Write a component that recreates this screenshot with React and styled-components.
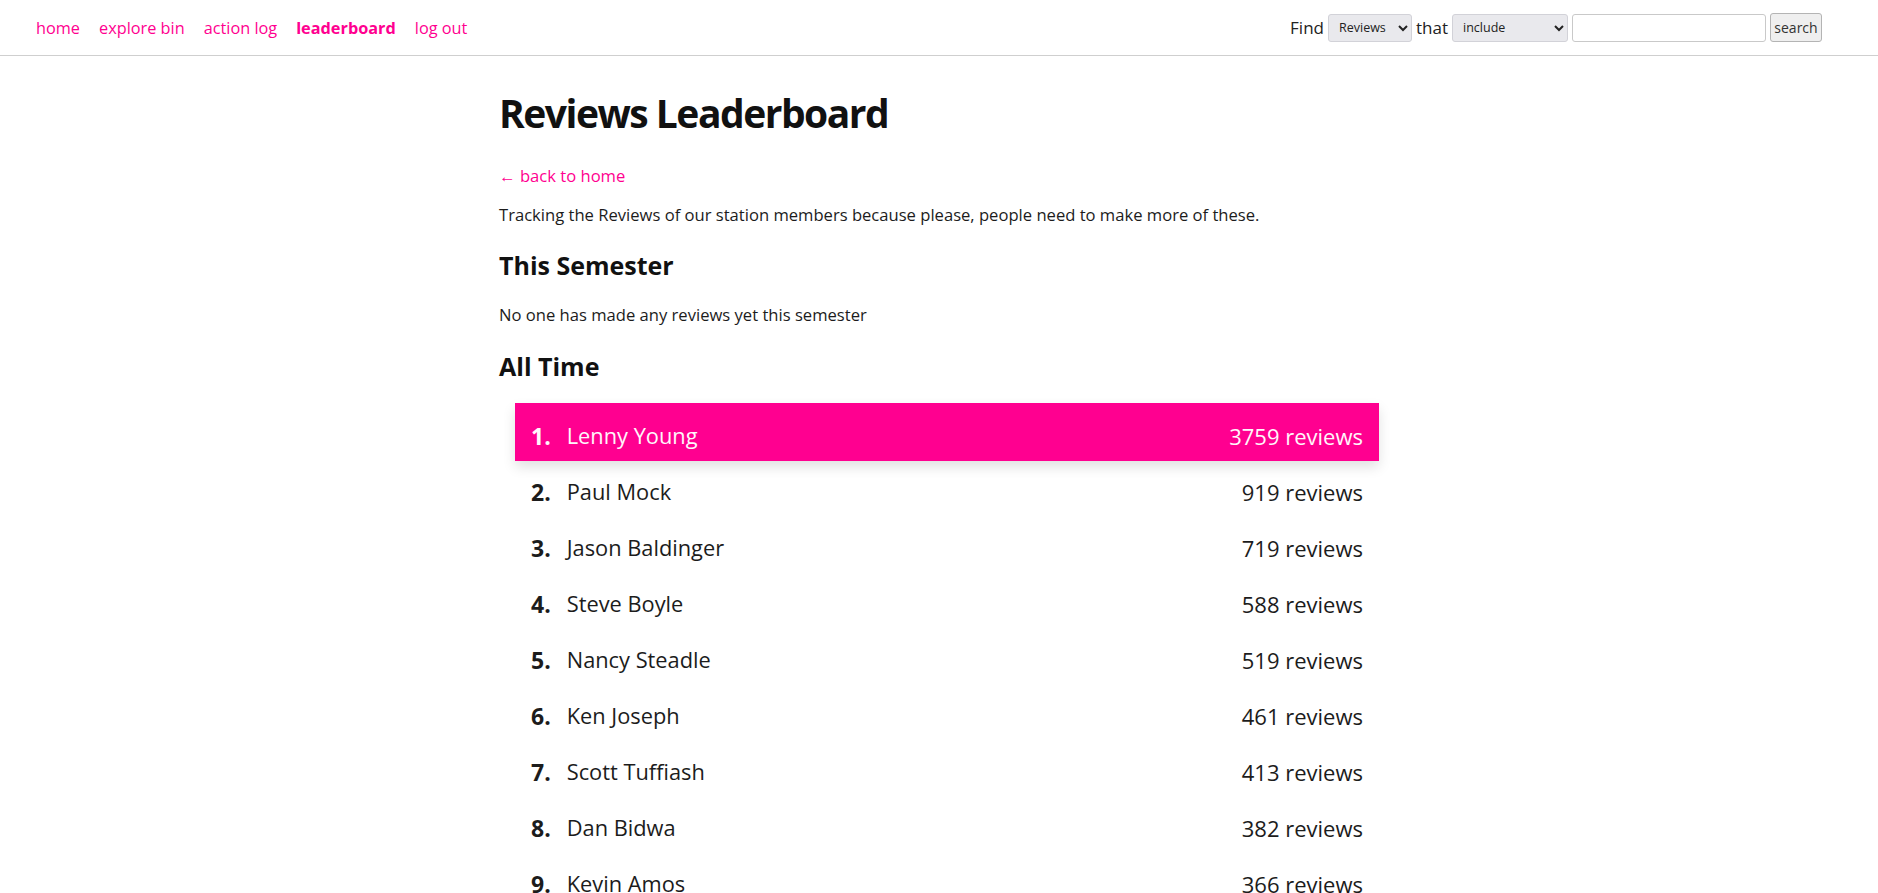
import React from 'react';
import styled, { createGlobalStyle } from 'styled-components';

const PINK = '#ff0090';

const GlobalStyle = createGlobalStyle`
  body {
    margin: 0;
    font-family: "Open Sans", "Noto Sans", sans-serif;
    color: #1c1c1c;
    background: #fff;
  }
`;

const NavBar = styled.nav`
  height: 55px;
  border-bottom: 1px solid #cfcfcf;
  display: flex;
  align-items: center;
  justify-content: space-between;
  padding: 0 56px 0 36px;
`;

const NavLinks = styled.div`
  display: flex;
  gap: 19px;
  align-items: center;
`;

const NavLink = styled.a`
  color: ${PINK};
  font-size: 16.3px;
  text-decoration: none;
  font-weight: ${props => (props.active ? 700 : 400)};
  cursor: pointer;
`;

const SearchForm = styled.form`
  display: flex;
  align-items: center;
  gap: 4px;
  font-size: 17px;
  color: #222;
`;

const Select = styled.select`
  width: ${props => props.width}px;
  height: 28px;
  font-size: 12.5px;
  font-family: "Open Sans", sans-serif;
  background: #e9e9ed;
  border: 1px solid #d2d2d8;
  border-radius: 3px;
  color: #222;
  padding: 0 4px 0 6px;
`;

const SearchInput = styled.input`
  width: 194px;
  height: 28px;
  box-sizing: border-box;
  border: 1px solid #c9c9c9;
  border-radius: 3px;
`;

const SearchButton = styled.button`
  height: 29px;
  width: 52px;
  padding: 0;
  font-size: 14px;
  font-family: "Open Sans", sans-serif;
  color: #333;
  background: #efefef;
  border: 1px solid #b4b4b4;
  border-radius: 3px;
`;

const Main = styled.main`
  width: 880px;
  margin: 0 auto;
  padding-bottom: 40px;
`;

const Title = styled.h1`
  font-size: 39px;
  font-weight: 700;
  letter-spacing: -1.5px;
  line-height: 52px;
  margin: 31px 0 23px;
  color: #111;
`;

const BackLink = styled.a`
  display: block;
  color: ${PINK};
  font-size: 16.6px;
  line-height: 27px;
  text-decoration: none;
`;

const Text = styled.p`
  font-size: 16.6px;
  line-height: 27px;
  margin: ${props => props.margin || '0'};
`;

const SectionTitle = styled.h2`
  font-size: 25px;
  font-weight: 700;
  line-height: 31px;
  margin: ${props => props.margin || '0'};
  color: #111;
`;

const Board = styled.ol`
  list-style: none;
  margin: 21px 0 0;
  padding: 0 0 0 16px;
`;

const Row = styled.li`
  display: flex;
  align-items: center;
  box-sizing: border-box;
  height: ${props => (props.top ? 58 : 56)}px;
  padding: 7px 16px 0;
  margin-bottom: ${props => (props.top ? -1 : 0)}px;
  background: ${props => (props.top ? PINK : 'transparent')};
  color: ${props => (props.top ? '#fff6fb' : '#1c1c1c')};
  box-shadow: ${props => (props.top ? '0 6px 12px rgba(0, 0, 0, 0.12)' : 'none')};
  position: relative;
`;

const Rank = styled.span`
  font-size: 23px;
  font-weight: 700;
  margin-right: 16px;
`;

const Name = styled.span`
  font-size: 21.8px;
  flex: 1;
`;

const Count = styled.span`
  font-size: 22px;
`;

const leaders = [
  ['Lenny Young', 3759],
  ['Paul Mock', 919],
  ['Jason Baldinger', 719],
  ['Steve Boyle', 588],
  ['Nancy Steadle', 519],
  ['Ken Joseph', 461],
  ['Scott Tuffiash', 413],
  ['Dan Bidwa', 382],
  ['Kevin Amos', 366],
  ['Mike Clark', 341],
];

export default function App() {
  return (
    <>
      <GlobalStyle />
      <NavBar>
        <NavLinks>
          <NavLink>home</NavLink>
          <NavLink>explore bin</NavLink>
          <NavLink>action log</NavLink>
          <NavLink active>leaderboard</NavLink>
          <NavLink>log out</NavLink>
        </NavLinks>
        <SearchForm onSubmit={e => e.preventDefault()}>
          <span>Find</span>
          <Select width={84} defaultValue="reviews">
            <option value="reviews">Reviews</option>
            <option value="albums">Albums</option>
          </Select>
          <span>that</span>
          <Select width={116} defaultValue="include">
            <option value="include">include</option>
            <option value="exclude">exclude</option>
          </Select>
          <SearchInput type="text" />
          <SearchButton type="submit">search</SearchButton>
        </SearchForm>
      </NavBar>
      <Main>
        <Title>Reviews Leaderboard</Title>
        <BackLink>← back to home</BackLink>
        <Text margin="12px 0 0">
          Tracking the Reviews of our station members because please, people need to make more of these.
        </Text>
        <SectionTitle margin="22px 0 0">This Semester</SectionTitle>
        <Text margin="20px 0 0">No one has made any reviews yet this semester</Text>
        <SectionTitle margin="23px 0 0">All Time</SectionTitle>
        <Board>
          {leaders.map(([name, count], i) => (
            <Row key={name} top={i === 0}>
              <Rank>{i + 1}.</Rank>
              <Name>{name}</Name>
              <Count>{count} reviews</Count>
            </Row>
          ))}
        </Board>
      </Main>
    </>
  );
}
